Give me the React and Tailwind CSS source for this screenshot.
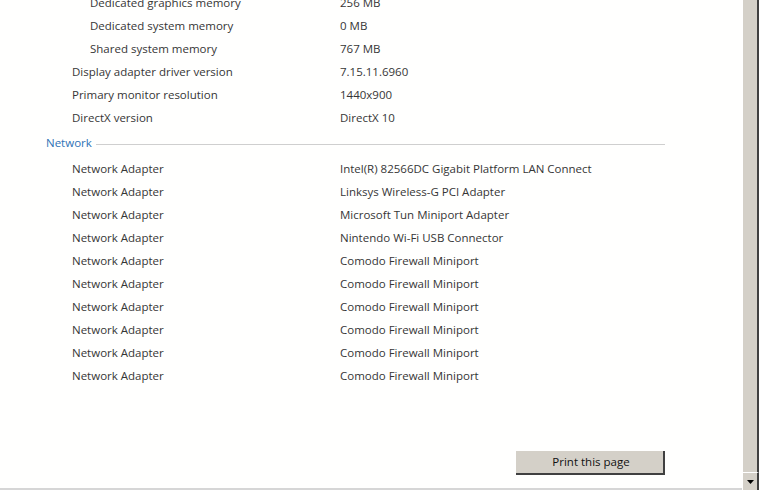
import React from 'react';

const displayRows = [
  { label: 'Dedicated graphics memory', value: '256 MB', indent: true },
  { label: 'Dedicated system memory', value: '0 MB', indent: true },
  { label: 'Shared system memory', value: '767 MB', indent: true },
  { label: 'Display adapter driver version', value: '7.15.11.6960' },
  { label: 'Primary monitor resolution', value: '1440x900' },
  { label: 'DirectX version', value: 'DirectX 10' },
];

const adapters = [
  'Intel(R) 82566DC Gigabit Platform LAN Connect',
  'Linksys Wireless-G PCI Adapter',
  'Microsoft Tun Miniport Adapter',
  'Nintendo Wi-Fi USB Connector',
  'Comodo Firewall Miniport',
  'Comodo Firewall Miniport',
  'Comodo Firewall Miniport',
  'Comodo Firewall Miniport',
  'Comodo Firewall Miniport',
  'Comodo Firewall Miniport',
];

const Row = ({ label, value, indent }) => (
  <div className="flex h-[23px] items-center">
    <span className={`${indent ? 'pl-[44px]' : 'pl-[26px]'} w-[294px] shrink-0 whitespace-nowrap`}>
      {label}
    </span>
    <span className="whitespace-nowrap">{value}</span>
  </div>
);

const App = () => {
  return (
    <div
      className="flex h-[490px] w-[759px] overflow-hidden bg-[#fffffe] text-[11.5px] text-[#363636]"
      style={{ fontFamily: '"Segoe UI", "Open Sans", "Noto Sans", sans-serif' }}
    >
      {/* Page content */}
      <div className="flex flex-1 flex-col border-b-2 border-[#d6d6d6]">
        <div className="mt-[-9px] pl-[46px] pr-[77px]">
          {displayRows.map((r, i) => (
            <Row key={i} {...r} />
          ))}

          {/* Section header */}
          <div className="flex h-[25px] items-center pt-[2px]">
            <span className="text-[#2f73b6]">Network</span>
            <span className="ml-[4px] mt-[4px] h-px flex-1 bg-[#cfcfcf]" />
          </div>

          <div className="pt-[3px]">
            {adapters.map((a, i) => (
              <Row key={i} label="Network Adapter" value={a} />
            ))}
          </div>

          <div className="mt-[64px] flex justify-end">
            <button className="h-[24px] w-[149px] border-b-2 border-r-2 border-[#404040] bg-[#d4d0c8] pl-[3px] text-[11.5px] text-[#111]">
              Print this page
            </button>
          </div>
        </div>
      </div>

      {/* Scrollbar */}
      <div className="flex w-[17px] shrink-0 flex-col bg-[#eceae6]">
        <div className="flex-1 border-l border-r-2 border-l-white border-r-[#404040] bg-[#d4d0c8]" />
        <div className="flex h-[18px] items-center justify-center border-l border-r-2 border-t border-l-white border-r-[#404040] border-t-white bg-[#d4d0c8]">
          <svg width="7" height="4" viewBox="0 0 7 4">
            <path d="M0 0h7L3.5 4z" fill="#000" />
          </svg>
        </div>
      </div>
    </div>
  );
};

export default App;
